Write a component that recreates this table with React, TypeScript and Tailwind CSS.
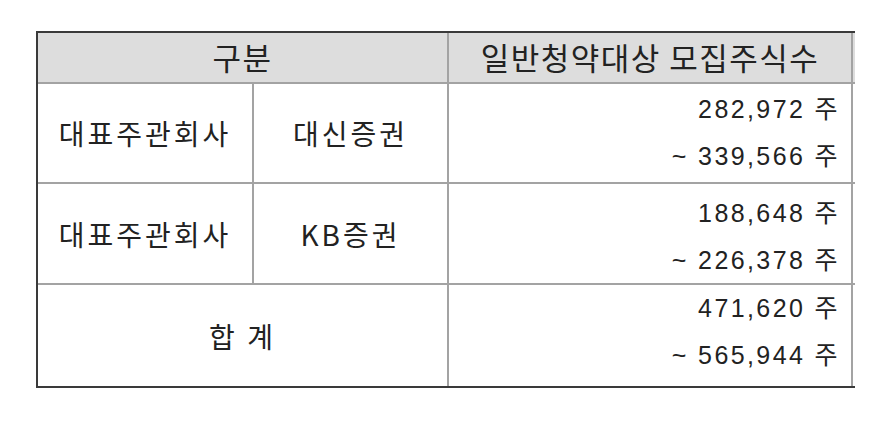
import React from "react";

const ko = { fontFamily: '"Noto Sans CJK KR", "Noto Sans", sans-serif' };
const num = { fontFamily: '"Liberation Sans", "Noto Sans CJK KR", sans-serif' };

function Nums({ a, b, extra }: { a: string; b: string; extra?: string }) {
  return (
    <div
      className={
        "bg-white flex flex-col justify-center items-end pr-[11px] text-[25px] leading-[47px] tracking-[2.4px] text-[#222] " +
        (extra ?? "")
      }
      style={num}
    >
      <div>{a} 주</div>
      <div>~ {b} 주</div>
    </div>
  );
}

function Label({ children, span }: { children: React.ReactNode; span?: boolean }) {
  return (
    <div
      className={
        "bg-white flex items-center justify-center text-[28px] tracking-[3px] text-[#222] " +
        (span ? "col-span-2" : "")
      }
      style={ko}
    >
      {children}
    </div>
  );
}

export default function App() {
  return (
    <div className="w-[888px] h-[430px] bg-white pt-[31px] pl-[36px]">
      <div className="w-[819px] border-t-2 border-l-2 border-b-2 border-[#3a3a3a]">
        <div className="grid grid-cols-[214px_193px_402px_2px] grid-rows-[49px_98px_99px_101px] gap-[2px] bg-[#a3a3a3]">
          <div
            className="col-span-2 bg-[#dddddd] flex items-center justify-center text-[31px] tracking-[1.5px] text-[#222]"
            style={ko}
          >
            구분
          </div>
          <div
            className="bg-[#dddddd] flex items-center justify-center text-[31px] tracking-[1.5px] text-[#222]"
            style={ko}
          >
            일반청약대상 모집주식수
          </div>
          <div className="bg-[#dddddd]" />

          <Label>대표주관회사</Label>
          <Label>대신증권</Label>
          <Nums a="282,972" b="339,566" />
          <div className="bg-white" />

          <Label>대표주관회사</Label>
          <Label>KB증권</Label>
          <Nums a="188,648" b="226,378" extra="pt-[6px]" />
          <div className="bg-white" />

          <Label span>합 계</Label>
          <Nums a="471,620" b="565,944" extra="pb-[8px]" />
          <div className="bg-white" />
        </div>
      </div>
    </div>
  );
}
